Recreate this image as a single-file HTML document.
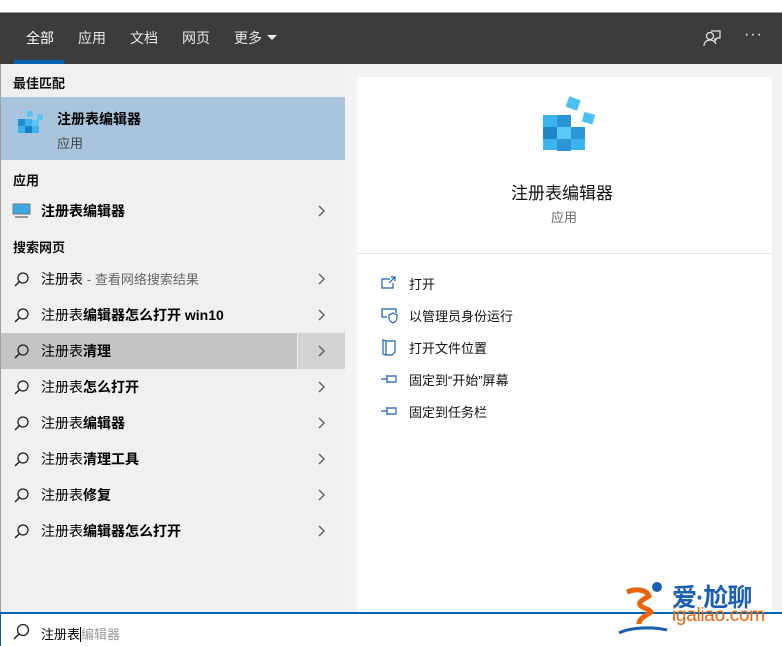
<!DOCTYPE html>
<html><head><meta charset="utf-8"><style>
*{margin:0;padding:0;box-sizing:border-box}
body{width:782px;height:646px;overflow:hidden;background:#fff;font-family:"Liberation Sans","Noto Sans CJK SC",sans-serif;font-size:14px;color:#000;position:relative}
.abs{position:absolute}
.hdr{left:0;top:12px;width:782px;height:52px;background:#3c3c3c;border-top:1px solid #999}
.tab{top:28px;color:#e8e8e8;font-size:14px}
.left{left:0;top:64px;width:345px;height:549px;background:#f0f0f0;border-left:1px solid #a0a0a0}
.right{left:345px;top:64px;width:437px;height:549px;background:#f3f3f3}
.card{left:357px;top:77px;width:415px;height:536px;background:#fff}
.sec{left:13px;font-weight:bold;font-size:13px;color:#111}
.row{left:1px;width:344px;height:36px}
.rt{position:absolute;left:40px;top:8px;font-size:14px;white-space:nowrap}
.chev{position:absolute;left:314px;top:11px;width:14px;height:14px}
.mag{position:absolute;left:12px;top:10px;width:18px;height:18px}
.act{left:409px;font-size:13px;color:#111}
.ai{left:380px;width:18px;height:18px}
</style></head><body>
<div class="abs hdr"></div>
<div class="abs tab" style="left:26px;color:#fff">全部</div>
<div class="abs" style="left:14px;top:60px;width:50px;height:4px;background:#0063b1"></div>
<div class="abs tab" style="left:78px">应用</div>
<div class="abs tab" style="left:130px">文档</div>
<div class="abs tab" style="left:182px">网页</div>
<div class="abs tab" style="left:234px">更多</div>
<svg class="abs" style="left:266px;top:34px" width="12" height="8"><path d="M1 1h10L6 6z" fill="#e8e8e8"/></svg>
<svg class="abs" style="left:702px;top:28px" width="20" height="20" fill="none" stroke="#e8e8e8" stroke-width="1.2"><circle cx="8" cy="8" r="3.5"/><path d="M2 18c0-4 3-6 6-6s5 2 6 4M9 3h9v7h-3l-2 3v-3"/></svg>
<div class="abs" style="left:744px;top:26px;color:#e8e8e8;font-size:16px;letter-spacing:1px">···</div>

<div class="abs left"></div>
<div class="abs right"></div>
<div class="abs card"></div>

<div class="abs sec" style="top:73px">最佳匹配</div>
<div class="abs" style="left:1px;top:97px;width:344px;height:63px;background:#a9c5de"></div>
<svg class="abs" style="left:16px;top:108px" width="30" height="30" viewBox="0 0 30 30"><rect x="2" y="11" width="7" height="7" fill="#1f8fd0"/><rect x="9" y="11" width="7" height="7" fill="#3fb0ea"/><rect x="2" y="18" width="7" height="7" fill="#3fb0ea"/><rect x="9" y="18" width="7" height="7" fill="#1a7fc0"/><rect x="16" y="18" width="7" height="7" fill="#3fb0ea"/><rect x="16" y="12" width="7" height="6" fill="#5cc4f2"/><rect x="11" y="3" width="6" height="6" fill="#5cc4f2"/><rect x="21" y="6" width="6" height="6" fill="#5cc4f2"/></svg>
<div class="abs" style="left:57px;top:109px;font-weight:bold;font-size:14px">注册表编辑器</div>
<div class="abs" style="left:57px;top:133px;font-size:13px;color:#444">应用</div>

<div class="abs sec" style="top:170px">应用</div>
<div class="abs row" style="top:193px">
<svg style="position:absolute;left:11px;top:10px" width="20" height="16"><rect x="1" y="1" width="17" height="10" fill="#3aa9e6" stroke="#777" stroke-width="1"/><rect x="3" y="13" width="13" height="2" fill="#999"/></svg>
<div class="rt" style="font-weight:bold">注册表编辑器</div>
<svg class="chev"><path d="M4 2l5 5-5 5" fill="none" stroke="#666" stroke-width="1.5"/></svg></div>

<div class="abs sec" style="top:237px">搜索网页</div>

<div class="abs row" style="top:261px"><svg class="mag"><circle cx="10" cy="7" r="5" fill="none" stroke="#222" stroke-width="1.3"/><path d="M6.5 10.5L2 15" stroke="#222" stroke-width="1.5"/></svg><div class="rt">注册表 <span style="color:#666;font-size:13px">- 查看网络搜索结果</span></div><svg class="chev"><path d="M4 2l5 5-5 5" fill="none" stroke="#666" stroke-width="1.5"/></svg></div>
<div class="abs row" style="top:297px"><svg class="mag"><circle cx="10" cy="7" r="5" fill="none" stroke="#222" stroke-width="1.3"/><path d="M6.5 10.5L2 15" stroke="#222" stroke-width="1.5"/></svg><div class="rt">注册表<b>编辑器怎么打开 win10</b></div><svg class="chev"><path d="M4 2l5 5-5 5" fill="none" stroke="#666" stroke-width="1.5"/></svg></div>
<div class="abs row" style="top:333px;background:#c4c4c4"><div style="position:absolute;left:296px;top:0;width:48px;height:36px;background:#d3d3d3;border-left:1px solid #eee"></div><svg class="mag"><circle cx="10" cy="7" r="5" fill="none" stroke="#222" stroke-width="1.3"/><path d="M6.5 10.5L2 15" stroke="#222" stroke-width="1.5"/></svg><div class="rt">注册表<b>清理</b></div><svg class="chev"><path d="M4 2l5 5-5 5" fill="none" stroke="#666" stroke-width="1.5"/></svg></div>
<div class="abs row" style="top:369px"><svg class="mag"><circle cx="10" cy="7" r="5" fill="none" stroke="#222" stroke-width="1.3"/><path d="M6.5 10.5L2 15" stroke="#222" stroke-width="1.5"/></svg><div class="rt">注册表<b>怎么打开</b></div><svg class="chev"><path d="M4 2l5 5-5 5" fill="none" stroke="#666" stroke-width="1.5"/></svg></div>
<div class="abs row" style="top:405px"><svg class="mag"><circle cx="10" cy="7" r="5" fill="none" stroke="#222" stroke-width="1.3"/><path d="M6.5 10.5L2 15" stroke="#222" stroke-width="1.5"/></svg><div class="rt">注册表<b>编辑器</b></div><svg class="chev"><path d="M4 2l5 5-5 5" fill="none" stroke="#666" stroke-width="1.5"/></svg></div>
<div class="abs row" style="top:441px"><svg class="mag"><circle cx="10" cy="7" r="5" fill="none" stroke="#222" stroke-width="1.3"/><path d="M6.5 10.5L2 15" stroke="#222" stroke-width="1.5"/></svg><div class="rt">注册表<b>清理工具</b></div><svg class="chev"><path d="M4 2l5 5-5 5" fill="none" stroke="#666" stroke-width="1.5"/></svg></div>
<div class="abs row" style="top:477px"><svg class="mag"><circle cx="10" cy="7" r="5" fill="none" stroke="#222" stroke-width="1.3"/><path d="M6.5 10.5L2 15" stroke="#222" stroke-width="1.5"/></svg><div class="rt">注册表<b>修复</b></div><svg class="chev"><path d="M4 2l5 5-5 5" fill="none" stroke="#666" stroke-width="1.5"/></svg></div>
<div class="abs row" style="top:513px"><svg class="mag"><circle cx="10" cy="7" r="5" fill="none" stroke="#222" stroke-width="1.3"/><path d="M6.5 10.5L2 15" stroke="#222" stroke-width="1.5"/></svg><div class="rt">注册表<b>编辑器怎么打开</b></div><svg class="chev"><path d="M4 2l5 5-5 5" fill="none" stroke="#666" stroke-width="1.5"/></svg></div>

<svg class="abs" style="left:540px;top:96px" width="58" height="60" viewBox="0 0 58 60"><g fill="#3bb3ee"><rect x="3" y="19" width="14" height="12"/><rect x="17" y="19" width="14" height="12" fill="#2a96d6"/><rect x="3" y="31" width="14" height="12" fill="#1f86c8"/><rect x="17" y="31" width="14" height="12" fill="#5cc8f5"/><rect x="31" y="31" width="14" height="12" fill="#2a96d6"/><rect x="3" y="43" width="14" height="11"/><rect x="17" y="43" width="14" height="12" fill="#2a96d6"/><rect x="31" y="43" width="14" height="11"/><rect x="27" y="2" width="12" height="11" fill="#4cc0f2" transform="rotate(20 33 8)"/><rect x="43" y="17" width="11" height="10" fill="#4cc0f2" transform="rotate(15 48 22)"/></g></svg>
<div class="abs" style="left:511px;top:179px;font-size:17px;color:#111">注册表编辑器</div>
<div class="abs" style="left:551px;top:207px;font-size:13px;color:#666">应用</div>
<div class="abs" style="left:357px;top:253px;width:415px;height:1px;background:#e6e6e6"></div>

<svg class="abs ai" style="top:274px" fill="none" stroke="#1a5fb4" stroke-width="1.2"><path d="M10 5H2v9h11v-5M9 9l6-6M11 3h4v4"/></svg>
<div class="abs act" style="top:274px">打开</div>
<svg class="abs ai" style="top:306px" fill="none" stroke="#1a5fb4" stroke-width="1.2"><path d="M7 11H2V3h14v4M9 9l4-2 4 2v3c0 2-2 4-4 5-2-1-4-3-4-5z"/></svg>
<div class="abs act" style="top:306px">以管理员身份运行</div>
<svg class="abs ai" style="top:338px" fill="none" stroke="#1a5fb4" stroke-width="1.2"><path d="M3 2l3 1v14l-3-1zM6 3h9v11l-3 3H6"/></svg>
<div class="abs act" style="top:338px">打开文件位置</div>
<svg class="abs ai" style="top:370px" fill="none" stroke="#1a5fb4" stroke-width="1.2"><path d="M1 9h6M7 5v8M7 6h9v6H7"/></svg>
<div class="abs act" style="top:370px">固定到“开始”屏幕</div>
<svg class="abs ai" style="top:402px" fill="none" stroke="#1a5fb4" stroke-width="1.2"><path d="M1 9h6M7 5v8M7 6h9v6H7"/></svg>
<div class="abs act" style="top:402px">固定到任务栏</div>

<div class="abs" style="left:0;top:612px;width:782px;height:34px;background:#fff;border-top:2px solid #0063b1;border-left:1px solid #0063b1"></div>
<svg class="abs" style="left:12px;top:622px" width="20" height="20"><circle cx="11" cy="8" r="5.5" fill="none" stroke="#222" stroke-width="1.3"/><path d="M7 12L2 17" stroke="#222" stroke-width="1.5"/></svg>
<div class="abs" style="left:41px;top:624px;font-size:13px">注册表<span style="border-left:1px solid #000"></span><span style="color:#999">编辑器</span></div>

<svg class="abs" style="left:617px;top:580px" width="56" height="56"><path d="M10 12c10-4 20-2 22 4-6 4-12 6-8 10 4 3 8 3 10 6-5 4-12 6-12 12" fill="none" stroke="#e8650e" stroke-width="5"/><circle cx="40" cy="7" r="5" fill="#1a5fb4"/><path d="M2 53c10-5 30-7 48-3" stroke="#1a5fb4" stroke-width="3" fill="none"/></svg>
<div class="abs" style="left:672px;top:578px;font-size:25px;color:#1a5fb4;font-weight:bold;letter-spacing:-1px">爱·尬聊</div>
<div class="abs" style="left:672px;top:605px;font-size:19px;color:#e8650e;letter-spacing:-0.3px">igaliao.com</div>
</body></html>
